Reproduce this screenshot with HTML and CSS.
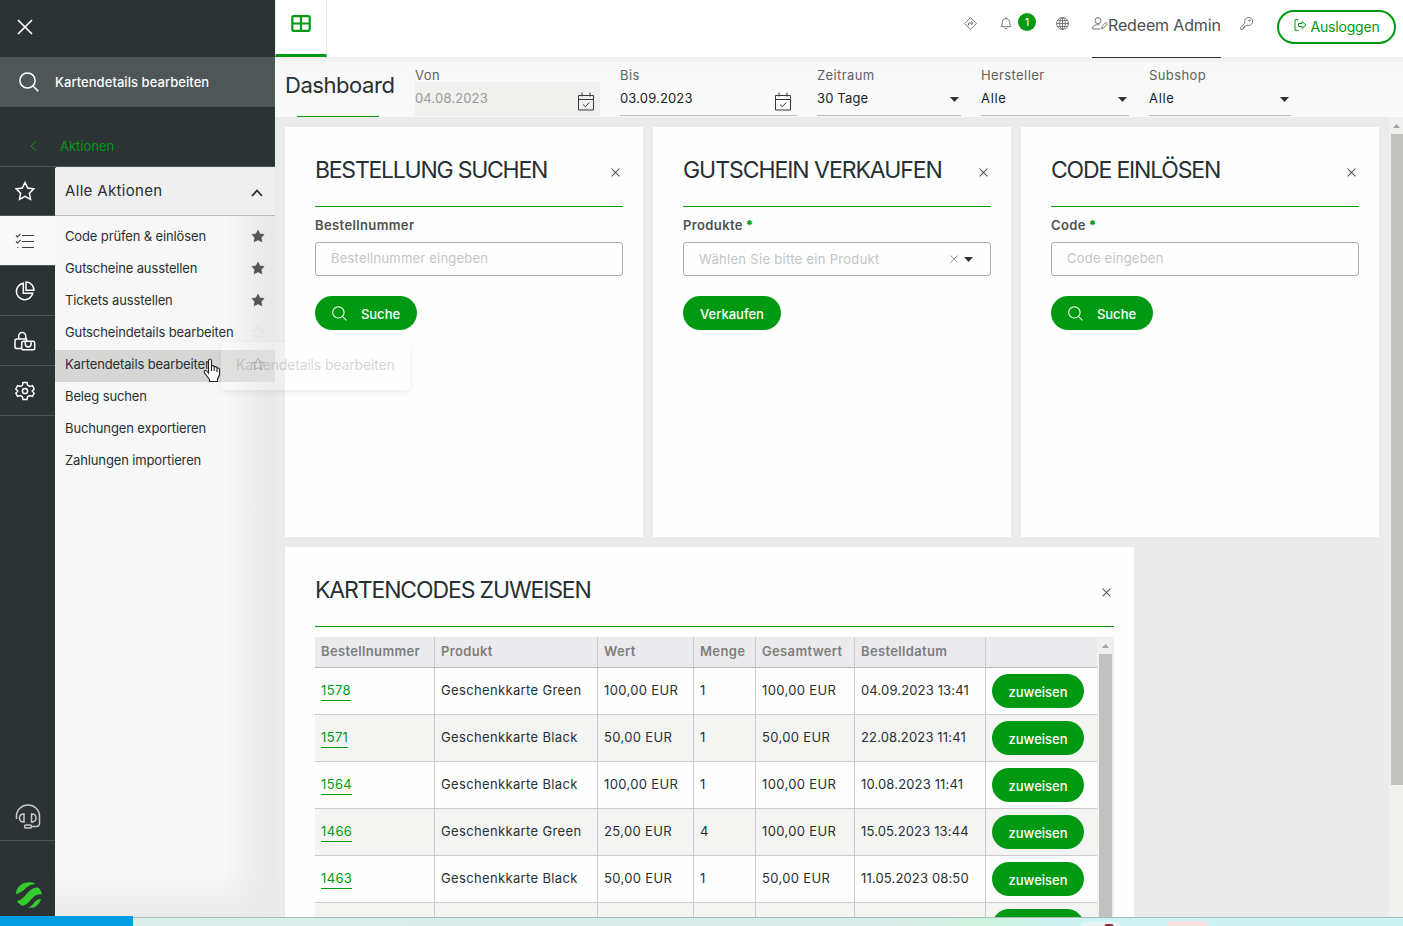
FILE: index.html
```
<!DOCTYPE html>
<html lang="de">
<head>
<meta charset="utf-8">
<title>Dashboard</title>
<link rel="stylesheet" href="styles.css">
</head>
<body>
<svg width="0" height="0" class="defs">
  <symbol id="close" viewBox="0 0 16 16"><path d="M1 1L15 15M15 1L1 15"/></symbol>
  <symbol id="search" viewBox="0 0 20 20"><circle cx="8.5" cy="8.5" r="7.6"/><path d="M14 14L19.3 19.3"/></symbol>
  <symbol id="star" viewBox="0 0 20 20"><path d="M10 1.5L12.7 7.1L18.8 7.9L14.4 12.2L15.5 18.3L10 15.4L4.5 18.3L5.6 12.2L1.2 7.9L7.3 7.1Z"/></symbol>
  <symbol id="calendar" viewBox="0 0 18 19"><path d="M1.5 3.5H16.5V18H1.5ZM1.5 7.5H16.5M5 .5V4.5M13 .5V4.5M6 12.5L8.3 14.7L12.3 10.5"/></symbol>
</svg>
<div class="app">
  <aside class="sidebar">
    <div class="side-close"><svg class="i16"><use href="#close"/></svg></div>
    <div class="side-search"><svg class="i20"><use href="#search"/></svg><span>Kartendetails bearbeiten</span></div>
    <div class="back"><svg width="7" height="12" viewBox="0 0 7 12"><path d="M6 1L1 6L6 11"/></svg><span>Aktionen</span></div>
    <div class="side-body">
      <nav class="rail">
        <div class="rail-item"><svg class="i20"><use href="#star"/></svg></div>
        <div class="rail-item active"><svg width="20" height="16" viewBox="0 0 20 16"><path d="M7 2.5H19M7 8.5H19M7 14.5H19M1 2.5L2.5 4L5.5 .8M1 8.5L2.5 10L5.5 6.8M2.2 14.5H3.4"/></svg></div>
        <div class="rail-item"><svg width="20" height="20" viewBox="0 0 20 20"><path d="M8.3 2.2A8.3 8.3 0 1 0 17.8 12.2H8.3ZM11 1V9.2H19A8.2 8.2 0 0 0 11 1Z"/></svg></div>
        <div class="rail-item"><svg width="22" height="20" viewBox="0 0 22 20"><path d="M7 17.5H2.8Q1 17.5 1 15.7V9.8Q1 8 2.8 8H12.5V10M4.7 8V5A3.5 3.5 0 0 1 11.7 5V8M9.5 10.2H19Q20.7 10.2 20.7 12V17Q20.7 18.8 19 18.8H9.5Q7.7 18.8 7.7 17V12Q7.7 10.2 9.5 10.2ZM11.3 10.5V13A2.9 2.9 0 0 0 17.1 13V10.5"/></svg></div>
        <div class="rail-item"><svg width="20" height="20" viewBox="0 0 20 20"><circle cx="10" cy="10" r="2.6"/><path d="M8 1.5H12L12.6 4.3L14.8 5.5L17.4 4.6L19.2 8L17.2 10L19.2 12.2L17.4 15.4L14.8 14.6L12.6 15.8L12 18.5H8L7.4 15.8L5.2 14.6L2.6 15.4L.8 12.2L2.8 10L.8 8L2.6 4.6L5.2 5.5L7.4 4.3Z"/></svg></div>
        <div class="rail-help"><svg width="26" height="26" viewBox="0 0 26 26"><path d="M1.500 15V12A11.500 11 0 0 1 24.500 12V19Q24.500 22.500 21 22.500H16.500M9 10V18Q4.500 18 4.500 14Q4.500 10 9 10ZM16.500 10V18Q21 18 21 14Q21 10 16.500 10ZM11 21H15Q16.500 21 16.500 22.500T15 24H11Q9.500 24 9.500 22.500T11 21Z"/></svg></div>
        <div class="rail-logo"><svg width="28" height="28" viewBox="0 0 28 28"><path d="M1 13C1 5 9 0 17 1.4C19 1.7 20 2.6 20.5 3C11 3 9 12 1 13Z"/><path d="M2 20C11 18 12 8 21 6.5C24 6 26 8 27 13.5C17 12 16 23 8 25C5 24 3 22 2 20Z"/><path d="M13 26.5C20 24 19 18 26 18C24.500 24 19 28 13 26.500Z"/></svg></div>
      </nav>
      <section class="actions">
        <h2>Alle Aktionen<svg width="12" height="8" viewBox="0 0 12 8"><path d="M1 7L6 1.500L11 7"/></svg></h2>
        <ul>
          <li>Code prüfen &amp; einlösen<svg class="fav on"><use href="#star"/></svg></li>
          <li>Gutscheine ausstellen<svg class="fav on"><use href="#star"/></svg></li>
          <li>Tickets ausstellen<svg class="fav on"><use href="#star"/></svg></li>
          <li>Gutscheindetails bearbeiten<svg class="fav"><use href="#star"/></svg></li>
          <li class="hover">Kartendetails bearbeiten<svg class="fav"><use href="#star"/></svg></li>
          <li>Beleg suchen</li>
          <li>Buchungen exportieren</li>
          <li>Zahlungen importieren</li>
        </ul>
      </section>
    </div>
  </aside>
  <main class="main">
    <header class="topbar">
      <div class="tab"><svg width="20" height="17" viewBox="0 0 20 17"><path d="M2.500 1.200H17.500Q18.700 1.200 18.700 2.400V14.600Q18.700 15.800 17.500 15.800H2.500Q1.300 15.800 1.300 14.600V2.400Q1.300 1.200 2.500 1.200ZM10 1V16M1 8.500H19"/></svg></div>
      <div class="tools">
        <svg class="t-dir" width="13" height="13" viewBox="0 0 13 13"><path d="M6.500 .6L12.400 6.500L6.500 12.400L.6 6.500ZM4.500 8.500V6.200H8.500M7.200 4.500L8.900 6.200L7.200 7.900"/></svg>
        <svg class="t-bell" width="12" height="13" viewBox="0 0 12 13"><path d="M1 9.700H11Q9.700 8.500 9.700 5.500C9.700 3 8.200 1.600 6 1.600S2.300 3 2.300 5.500Q2.300 8.500 1 9.700ZM6 .3V1.600M4.800 11Q6 12.800 7.200 11"/></svg>
        <span class="badge">1</span>
        <svg class="t-globe" width="13" height="13" viewBox="0 0 13 13"><circle cx="6.500" cy="6.500" r="5.900"/><ellipse cx="6.500" cy="6.500" rx="2.800" ry="5.900"/><path d="M6.500 .6V12.400M.6 6.500H12.400M1.500 3.500H11.500M1.500 9.500H11.500"/></svg>
        <div class="user"><svg width="16" height="13" viewBox="0 0 16 13"><circle cx="6" cy="3.600" r="3"/><path d="M8.500 12H.6C.6 9 2.500 7.800 4.500 7.800H7.500M9.500 11.800L10 9.500L13.800 5.300L15.400 6.800L11.600 10.900Z"/></svg><span>Redeem Admin</span></div>
        <svg class="t-key" width="13" height="13" viewBox="0 0 13 13"><path d="M5 6.200A4 4 0 1 1 7 8.100L5.800 9.200H4.500V10.500H3.200V12.300H.6V10.400Z"/><circle cx="9.500" cy="3.500" r=".8"/></svg>
        <button class="logout"><svg width="13" height="12" viewBox="0 0 13 12"><path d="M4.500 .7H1V11.300H4.500M4.500 4.500H8V2.500L12 6L8 9.500V7.500H4.500Z"/></svg>Ausloggen</button>
      </div>
    </header>
    <div class="filters">
      <h1>Dashboard</h1>
      <div class="filter von"><label>Von</label><div class="val">04.08.2023<svg class="cal"><use href="#calendar"/></svg></div></div>
      <div class="filter bis"><label>Bis</label><div class="val">03.09.2023<svg class="cal"><use href="#calendar"/></svg></div></div>
      <div class="filter zeit"><label>Zeitraum</label><div class="val">30 Tage<i class="caret"></i></div></div>
      <div class="filter herst"><label>Hersteller</label><div class="val">Alle<i class="caret"></i></div></div>
      <div class="filter sub"><label>Subshop</label><div class="val">Alle<i class="caret"></i></div></div>
    </div>
    <div class="content">
      <div class="board">
        <div class="cards">
          <section class="card">
            <div class="card-head"><h3 class="h-a">BESTELLUNG SUCHEN</h3><svg class="x"><use href="#close"/></svg></div>
            <label>Bestellnummer</label>
            <div class="field">Bestellnummer eingeben</div>
            <button class="btn search"><svg class="i15"><use href="#search"/></svg>Suche</button>
          </section>
          <section class="card">
            <div class="card-head"><h3 class="h-b">GUTSCHEIN VERKAUFEN</h3><svg class="x"><use href="#close"/></svg></div>
            <label>Produkte <b>*</b></label>
            <div class="field select">Wählen Sie bitte ein Produkt<svg class="clear"><use href="#close"/></svg><i class="caret"></i></div>
            <button class="btn sell">Verkaufen</button>
          </section>
          <section class="card">
            <div class="card-head"><h3 class="h-c">CODE EINLÖSEN</h3><svg class="x"><use href="#close"/></svg></div>
            <label>Code <b>*</b></label>
            <div class="field">Code eingeben</div>
            <button class="btn search"><svg class="i15"><use href="#search"/></svg>Suche</button>
          </section>
        </div>
        <section class="card wide">
          <div class="card-head"><h3 class="h-d">KARTENCODES ZUWEISEN</h3><svg class="x blue"><use href="#close"/></svg></div>
          <div class="table-wrap">
            <table>
              <colgroup><col class="c1"><col class="c2"><col class="c3"><col class="c4"><col class="c5"><col class="c6"><col class="c7"></colgroup>
              <thead><tr><th>Bestellnummer</th><th>Produkt</th><th>Wert</th><th>Menge</th><th>Gesamtwert</th><th>Bestelldatum</th><th></th></tr></thead>
              <tbody>
                <tr><td><a>1578</a></td><td>Geschenkkarte Green</td><td>100,00 EUR</td><td>1</td><td>100,00 EUR</td><td class="date">04.09.2023 13:41</td><td><button class="btn">zuweisen</button></td></tr>
                <tr><td><a>1571</a></td><td>Geschenkkarte Black</td><td>50,00 EUR</td><td>1</td><td>50,00 EUR</td><td class="date">22.08.2023 11:41</td><td><button class="btn">zuweisen</button></td></tr>
                <tr><td><a>1564</a></td><td>Geschenkkarte Black</td><td>100,00 EUR</td><td>1</td><td>100,00 EUR</td><td class="date">10.08.2023 11:41</td><td><button class="btn">zuweisen</button></td></tr>
                <tr><td><a>1466</a></td><td>Geschenkkarte Green</td><td>25,00 EUR</td><td>4</td><td>100,00 EUR</td><td class="date">15.05.2023 13:44</td><td><button class="btn">zuweisen</button></td></tr>
                <tr><td><a>1463</a></td><td>Geschenkkarte Black</td><td>50,00 EUR</td><td>1</td><td>50,00 EUR</td><td class="date">11.05.2023 08:50</td><td><button class="btn">zuweisen</button></td></tr>
                <tr><td></td><td></td><td></td><td></td><td></td><td></td><td><button class="btn"></button></td></tr>
              </tbody>
            </table>
            <div class="scroll"><i class="up"></i><div class="thumb"></div></div>
          </div>
        </section>
      </div>
      <div class="scroll page"><i class="up"></i><div class="thumb"></div></div>
    </div>
  </main>
</div>
<footer class="taskbar"><div class="progress"></div><div class="task-a"><i></i></div><div class="task-b"></div></footer>
<div class="tooltip">Kartendetails bearbeiten</div>
<svg class="cursor" width="18" height="25" viewBox="0 0 18 25"><path d="M5.500 15V3Q5.500 1 7 1T8.500 3V9.500V8Q10 7 11.200 8.300V10V9Q12.800 8 14 9.500V11V10.200Q15.500 9.500 16.500 11V17L14.500 21V23.500H6.500V21.500L1.500 15Q.6 13 2 12.500T5.500 15ZM8.500 9V13M11.200 10V13M14 11V14"/></svg>
</body>
</html>
```
FILE: styles.css
```
* { box-sizing: border-box; }
body { margin: 0; width: 1403px; height: 926px; overflow: hidden; display: flex; flex-direction: column; font-family: Inter, "Liberation Sans", sans-serif; font-size: 13px; color: #263032; background: #ebebeb; }
svg { fill: none; stroke: currentColor; flex: none; }
h1, h2, h3, ul { margin: 0; padding: 0; font-weight: 400; list-style: none; }
button { font: inherit; border: 0; padding: 0; margin: 0; }
.defs { position: absolute; }
.i16 { width: 16px; height: 16px; }
.i20 { width: 20px; height: 20px; }
.i15 { width: 15px; height: 15px; }
.app { height: 917px; display: flex; overflow: hidden; }

/* Sidebar */
.sidebar { width: 275px; flex: none; display: flex; flex-direction: column; background: #2b3334; color: #fff; }
.side-close { height: 57px; display: flex; align-items: center; padding: 0 0 3px 17px; }
.side-close svg { stroke-width: 1.7; }
.side-search { height: 50px; display: flex; align-items: center; gap: 16px; padding-left: 19px; background: #4f5657; font-weight: 500; letter-spacing: .05px; }
.side-search svg { stroke-width: 1.5; }
.back { height: 59px; display: flex; align-items: center; gap: 23px; padding: 19px 0 0 30px; color: #009a12; }
.side-body { flex: 1; display: flex; border-top: 1px solid #4c5455; }
.rail { width: 55px; display: flex; flex-direction: column; }
.rail-item { height: 50px; display: flex; align-items: center; justify-content: center; border-bottom: 1px solid #4c5455; padding-right: 5px; }
.rail-item:first-child { height: 49px; }
.rail-item svg { stroke-width: 1.5; }
.rail-item.active { background: #fafafa; color: #3a4243; }
.rail-item.active svg { stroke-width: 1.1; }
.rail-help { margin-top: auto; height: 39px; padding: 2px 0 0 15px; border-bottom: 1px solid #4c5455; color: #c9c9c9; }
.rail-help svg { stroke-width: 1.5; }
.rail-logo { height: 76px; padding: 40px 0 0 15px; }
.rail-logo svg { fill: #36cc30; stroke: none; width: 28px; height: 28px; }
.actions { width: 220px; color: #263032; background: linear-gradient(to top, #ebebeb 0, rgba(235,235,235,0) 45px), linear-gradient(to left, #e9e9e9 0, #ececec 15px, rgba(247,247,247,0) 50px), #f7f7f7; border-radius: 3px 0 0 0; }
.actions h2 { height: 49px; display: flex; align-items: center; justify-content: space-between; padding: 0 12px 2px 10px; font-size: 15px; letter-spacing: .33px; background: #efefef; border-bottom: 1px solid #bbb; border-radius: 3px 0 0 0; }
.actions h2 svg { margin-top: 5px; stroke-width: 1.8; }
.actions ul { padding-top: 6px; }
.actions li { height: 32px; display: flex; align-items: center; justify-content: space-between; padding: 0 10px 4px; letter-spacing: -.13px; white-space: nowrap; }
.actions .hover { background: #d6d6d5; }
.fav { width: 14px; height: 14px; color: #ddd; margin-top: -1px; }
.fav.on { fill: #555; color: #555; }
.hover .fav { color: #888; }

/* Header */
.main { flex: 1; min-width: 0; display: flex; flex-direction: column; }
.topbar { height: 57px; flex: none; display: flex; justify-content: space-between; background: #fff; }
.tab { width: 52px; display: flex; justify-content: center; padding-top: 15px; border-right: 1px solid #e7e7e7; border-left: 1px solid #e7e7e7; border-bottom: 3px solid #009a12; color: #009a12; }
.tab svg { stroke-width: 2.2; }
.tools { display: flex; align-items: flex-start; color: #757a7b; padding-right: 7px; }
.t-dir { margin: 17px 23px 0 0; }
.t-bell { margin: 17px 6px 0 0; }
.badge { width: 18px; height: 18px; margin-top: 13px; border-radius: 9px; background: #009a12; color: #fff; font-size: 11px; line-height: 18px; text-align: center; }
.t-globe { margin: 17px 23px 0 20px; }
.user { width: 129px; height: 58px; display: flex; border-bottom: 1px solid #2b3334; color: #495152; font-size: 16px; letter-spacing: -.15px; white-space: nowrap; z-index: 1; }
.user svg { margin-top: 17px; color: #757a7b; }
.user span { line-height: 51px; }
.t-key { margin: 17px 24px 0 19px; }
.logout { width: 119px; height: 34px; margin-top: 10px; display: flex; align-items: center; justify-content: center; gap: 4px; padding-bottom: 2px; border: 2px solid #009a12; border-radius: 17px; background: #fff; color: #009a12; font-size: 14px; letter-spacing: -.2px; }
.logout svg { margin-bottom: 3px; }

/* Filters */
.filters { height: 60px; flex: none; display: flex; padding-left: 10px; background: linear-gradient(#efefef, #f9f9f9 8px); }
.filters h1 { width: 130px; font-size: 22px; line-height: 56px; letter-spacing: -.45px; background: linear-gradient(#009a12, #009a12) 12px 59px / 82px 1px no-repeat; }
.filter label { display: block; height: 25px; padding-top: 10px; line-height: 17px; color: #5c6263; letter-spacing: .4px; }
.val { height: 34px; display: flex; justify-content: space-between; line-height: 33px; border-bottom: 1px solid #bbb; color: #1b2224; letter-spacing: .15px; }
.von { width: 185px; margin-right: 20px; }
.von .val { background: #f0f0ee; color: #999b98; border-color: #f0f0ee; }
.bis { width: 177px; margin-right: 20px; }
.zeit { width: 144px; margin-right: 20px; }
.herst { width: 148px; margin-right: 20px; }
.sub { width: 142px; }
.herst .val, .sub .val { letter-spacing: .7px; }
.cal { width: 18px; height: 19px; margin: 10px 5px 0 0; color: #333b3d; }
.caret { width: 9px; height: 5px; background: #333; clip-path: polygon(0 0, 100% 0, 50% 100%); }
.val .caret { margin: 15px 2px 0 0; }

/* Cards */
.content { flex: 1; display: flex; min-height: 0; }
.board { flex: 1; padding: 10px 0 0 10px; overflow: hidden; }
.cards { display: flex; gap: 10px; margin-bottom: 10px; }
.card { width: 358px; height: 410px; padding: 20px 20px 0 30px; background: #fefefe; }
.card-head { height: 60px; display: flex; justify-content: space-between; border-bottom: 1px solid #009a12; margin-bottom: 10px; }
.card h3 { font-size: 23px; line-height: 46px; white-space: nowrap; }
.h-a { letter-spacing: -1.25px; }
.h-b { letter-spacing: -1.05px; }
.h-c { letter-spacing: -1.18px; }
.h-d { letter-spacing: -1.13px; }
.x { width: 9px; height: 9px; margin: 21px 3px 0 0; color: #555; stroke-width: 1.8; }
.x.blue { color: #456; }
.card label { display: block; line-height: 17px; margin-bottom: 8px; font-weight: 600; color: #4b5253; letter-spacing: .38px; }
.card label b { color: #009a12; margin-left: -1px; }
.field { height: 34px; display: flex; align-items: center; padding: 0 17px 2px 15px; border: 1px solid #aaa; border-radius: 3px; color: #c4c4c4; margin-bottom: 20px; letter-spacing: .22px; }
.select { padding-bottom: 1px; letter-spacing: .3px; }
.select .caret { margin-top: 2px; }
.clear { width: 8px; height: 8px; margin: 0 6px 0 auto; stroke-width: 2; color: #8a9a9c; }
.btn { height: 34px; border-radius: 17px; background: #009a12; color: #fff; font-size: 13px; font-weight: 500; display: flex; align-items: center; justify-content: center; padding-top: 2px; }
.search { width: 102px; gap: 14px; }
.search svg { stroke-width: 1.4; margin-bottom: 1px; }
.sell { width: 98px; }
.wide { width: 849px; height: 450px; }

/* Table */
.table-wrap { display: flex; }
table { width: 782px; table-layout: fixed; border-collapse: separate; border-spacing: 0; }
.c1 { width: 120px; } .c2 { width: 163px; } .c3 { width: 96px; } .c4 { width: 62px; } .c5 { width: 99px; } .c6 { width: 131px; } .c7 { width: 111px; }
th, td { padding: 0 6px; text-align: left; white-space: nowrap; border-right: 1px solid #cbcbcd; border-bottom: 1px solid #cbcbcd; letter-spacing: .35px; }
th:last-child, td:last-child { border-right: 0; }
th { height: 31px; padding-bottom: 2px; background: #ebebed; color: #7d7d7d; font-weight: 600; border-bottom-color: #b9b9b9; }
td { height: 47px; padding-bottom: 3px; background: #fefefe; }
.date { letter-spacing: .15px; }
td:last-child { padding-bottom: 0; }
tr:nth-child(even) td { background: #f4f4f2; }
td a { display: inline-block; line-height: 20px; border-bottom: 1px solid #009a12; color: #009a12; padding-top: 2px; }
td .btn { width: 92px; }
.scroll { width: 17px; display: flex; flex-direction: column; align-items: center; background: #f0f0ef; }
.up { width: 7px; height: 4px; margin: 7px 0 6px; background: #a3a3a3; clip-path: polygon(50% 0, 100% 100%, 0 100%); }
.thumb { width: 13px; flex: 1; background: #c1c1c0; }
.page { width: 14px; align-items: flex-end; }
.page .up { margin-right: 3px; }
.page .thumb { width: 12px; flex: none; height: 651px; }

/* Taskbar */
.taskbar { height: 9px; display: flex; border-top: 1px solid #a9bcba; background: linear-gradient(90deg, #daf0ec 0, #d9eeea 900px, #cdf2dc 980px, #cff3f2 1060px, #cdf4f2 100%); }
.progress { width: 133px; height: 10px; margin: -2px 948px 0 0; background: #009de0; flex: none; }
.task-a { width: 38px; height: 6px; margin-top: 4px; background: #e6f4f4; border-radius: 3px 3px 0 0; }
.task-a i { display: block; width: 10px; height: 3px; margin: 2px 0 0 23px; border-radius: 5px 5px 0 0; background: #833; }
.task-b { width: 40px; height: 6px; margin: 3px 0 0 49px; background: #fae3e3; border-radius: 3px 3px 0 0; }

/* Overlays */
.tooltip { position: absolute; left: 221px; top: 342px; width: 189px; height: 48px; padding-left: 15px; line-height: 46px; font-size: 14px; letter-spacing: -.15px; white-space: nowrap; color: rgba(110,110,110,.3); background: rgba(255,255,255,.22); border-radius: 3px; box-shadow: 0 2px 6px rgba(0,0,0,.07); }
.cursor { position: absolute; left: 203px; top: 358px; fill: #fff; stroke: #222; stroke-width: 1.1; }
```
